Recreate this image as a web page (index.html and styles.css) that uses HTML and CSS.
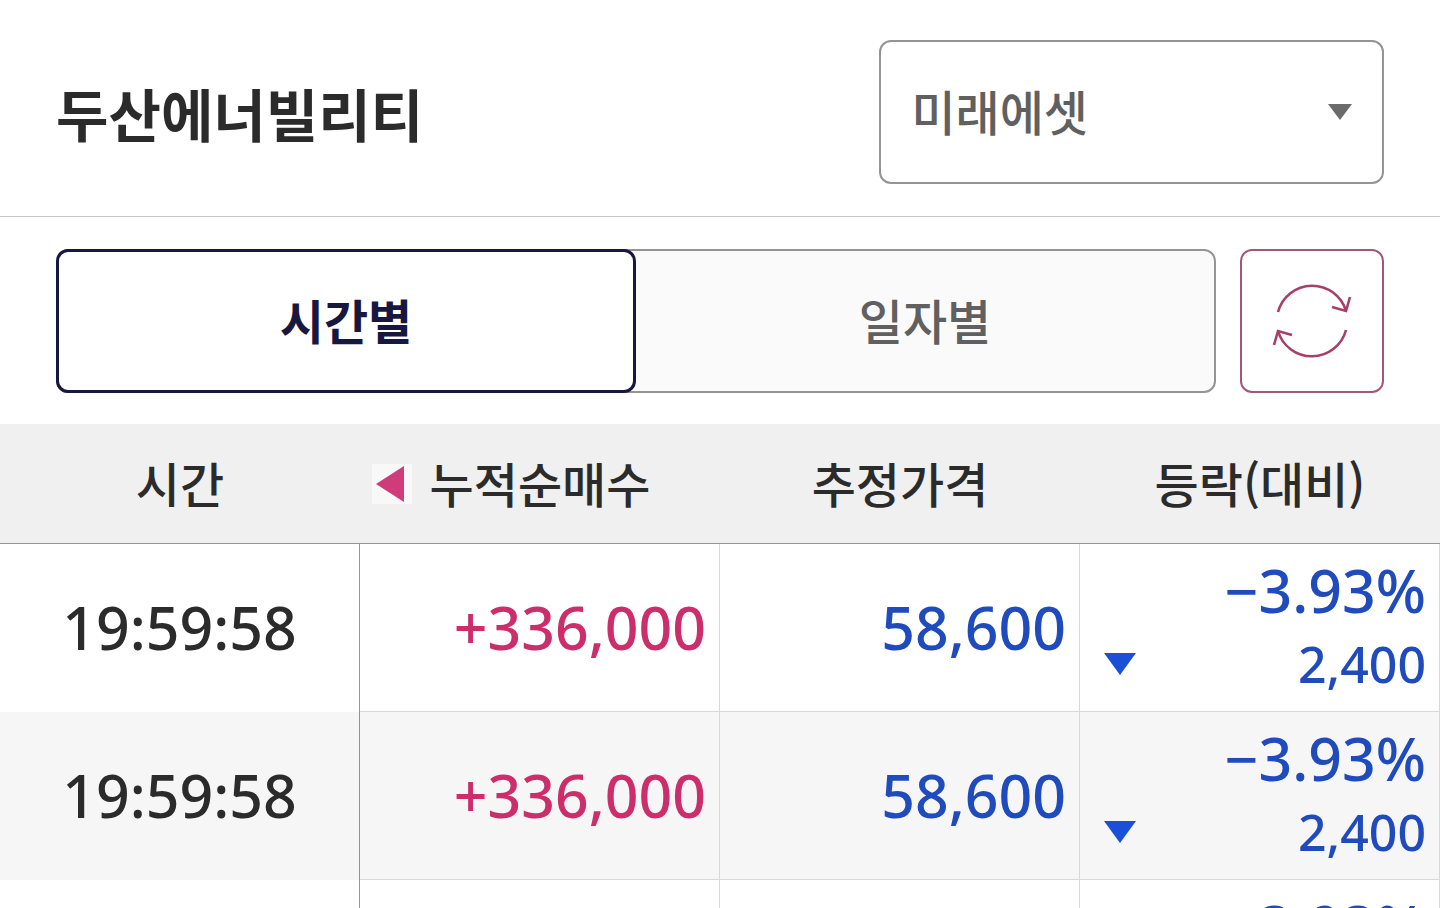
FILE: index.html
```
<!DOCTYPE html>
<html lang="ko">
<head>
    <meta charset="UTF-8">
    <meta name="viewport" content="width=device-width, initial-scale=1.0">
    <title>두산에너빌리티</title>
    <link rel="stylesheet" href="styles.css">
</head>
<body>
    <header class="header">
        <h1>두산에너빌리티</h1>
        <div class="select-box">
            <select class="broker" aria-label="증권사">
                <option>미래에셋</option>
            </select>
            <svg class="select-arrow" viewBox="0 0 26 18" aria-hidden="true"><path d="M1 1h24L13 17z" fill="#6b6b6b"/></svg>
        </div>
    </header>

    <main>
        <div class="toolbar">
            <div class="tabs">
                <button type="button" class="tab active">시간별</button>
                <button type="button" class="tab">일자별</button>
            </div>
            <button type="button" class="refresh" aria-label="새로고침">
                <svg viewBox="0 0 84 84" fill="none" stroke="#a83f68" stroke-width="2.6" aria-hidden="true">
                    <path d="M8 33A35.3 35.3 0 0 1 76 32"/>
                    <path d="M62 28l14 4 4-14"/>
                    <path d="M76 51A35.3 35.3 0 0 1 8 52"/>
                    <path d="M4 66l4-14 14 4"/>
                </svg>
            </button>
        </div>

        <table class="trades">
            <thead>
                <tr>
                    <th>시간</th>
                    <th>
                        <div class="th-net">
                            <svg class="prev" viewBox="0 0 40 40" aria-hidden="true"><path d="M4 20L32 2v36z" fill="#cf3c79"/></svg>
                            <span>누적순매수</span>
                        </div>
                    </th>
                    <th>추정가격</th>
                    <th>등락(대비)</th>
                </tr>
            </thead>
            <tbody>
                <tr>
                    <td class="time">19:59:58</td>
                    <td class="up">+336,000</td>
                    <td class="down">58,600</td>
                    <td class="down">
                        <div class="rate">−3.93%</div>
                        <div class="diff">
                            <svg class="mark" viewBox="0 0 32 22" aria-hidden="true"><path d="M0 0h32L16 22z" fill="#1a4fd8"/></svg>
                            <span>2,400</span>
                        </div>
                    </td>
                </tr>
                <tr>
                    <td class="time">19:59:58</td>
                    <td class="up">+336,000</td>
                    <td class="down">58,600</td>
                    <td class="down">
                        <div class="rate">−3.93%</div>
                        <div class="diff">
                            <svg class="mark" viewBox="0 0 32 22" aria-hidden="true"><path d="M0 0h32L16 22z" fill="#1a4fd8"/></svg>
                            <span>2,400</span>
                        </div>
                    </td>
                </tr>
                <tr>
                    <td class="time">19:59:58</td>
                    <td class="up">+336,000</td>
                    <td class="down">58,600</td>
                    <td class="down">
                        <div class="rate">−3.93%</div>
                        <div class="diff">
                            <svg class="mark" viewBox="0 0 32 22" aria-hidden="true"><path d="M0 0h32L16 22z" fill="#1a4fd8"/></svg>
                            <span>2,400</span>
                        </div>
                    </td>
                </tr>
            </tbody>
        </table>
    </main>
</body>
</html>
```
FILE: styles.css
```
* {
    margin: 0;
    padding: 0;
    box-sizing: border-box;
}

body {
    font-family: "Noto Sans CJK KR", sans-serif;
    font-size: 48px;
    background: #fff;
    color: #2b2b2b;
}

button,
select {
    font: inherit;
    cursor: pointer;
}

.header {
    display: flex;
    align-items: center;
    justify-content: space-between;
    padding: 40px 56px 32px;
    border-bottom: 1px solid #c8c8c8;
}

.header h1 {
    font-size: 57px;
    font-weight: 700;
    line-height: 80px;
}

.select-box {
    display: grid;
    align-items: center;
    width: 38%;
}

.broker,
.select-arrow {
    grid-area: 1 / 1;
}

.broker {
    appearance: none;
    width: 100%;
    height: 144px;
    padding: 0 80px 4px 30px;
    border: 2px solid #949494;
    border-radius: 12px;
    background: #fff;
    color: #606060;
    font-weight: 500;
}

.select-arrow {
    justify-self: end;
    width: 26px;
    height: 18px;
    margin-right: 31px;
    pointer-events: none;
}

.toolbar {
    display: flex;
    gap: 24px;
    padding: 32px 56px 31px;
}

.tabs {
    display: flex;
    flex: 1;
    height: 144px;
    border: 2px solid #949494;
    border-radius: 12px;
    background: #fafafa;
}

.tab {
    width: 50%;
    padding-bottom: 4px;
    border: 0;
    background: none;
    color: #606060;
    font-weight: 500;
}

.tab.active {
    width: calc(50% + 2px);
    margin: -2px 0 -2px -2px;
    border: 3px solid #17173f;
    border-radius: 12px;
    background: #fff;
    color: #17173f;
    font-weight: 700;
}

.refresh {
    display: flex;
    align-items: center;
    justify-content: center;
    width: 144px;
    height: 144px;
    border: 2px solid #a3557a;
    border-radius: 12px;
    background: #fff;
}

.refresh svg {
    width: 84px;
    height: 84px;
}

.trades {
    width: 100%;
    table-layout: fixed;
    border-collapse: separate;
    border-spacing: 0;
}

.trades th {
    height: 120px;
    padding-bottom: 4px;
    border-bottom: 1px solid #949494;
    background: #f0f0f0;
    font-weight: 500;
    line-height: 72px;
}

.th-net {
    display: grid;
    grid-template-columns: 1fr auto 1fr;
    align-items: center;
}

.prev {
    width: 40px;
    height: 40px;
    margin: 4px 0 0 12px;
    background: #f8f8f8;
}

.trades td {
    height: 168px;
    padding: 0 13px 2px 24px;
    border-right: 1px solid #d8d8d8;
    border-bottom: 1px solid #d8d8d8;
    font-family: "Noto Sans", "Noto Sans CJK KR", sans-serif;
    font-size: 59px;
    font-weight: 500;
    line-height: 74px;
    text-align: right;
}

.trades tbody tr:nth-child(even) {
    background: #f6f6f6;
}

.trades .time {
    padding: 0 0 2px;
    border-right-color: #949494;
    border-bottom: 0;
    text-align: center;
}

.up {
    color: #cc2e6c;
}

.down {
    color: #1f4bbd;
}

.diff {
    display: flex;
    align-items: center;
    justify-content: space-between;
    font-size: 50px;
}

.mark {
    width: 32px;
    height: 22px;
}
```
